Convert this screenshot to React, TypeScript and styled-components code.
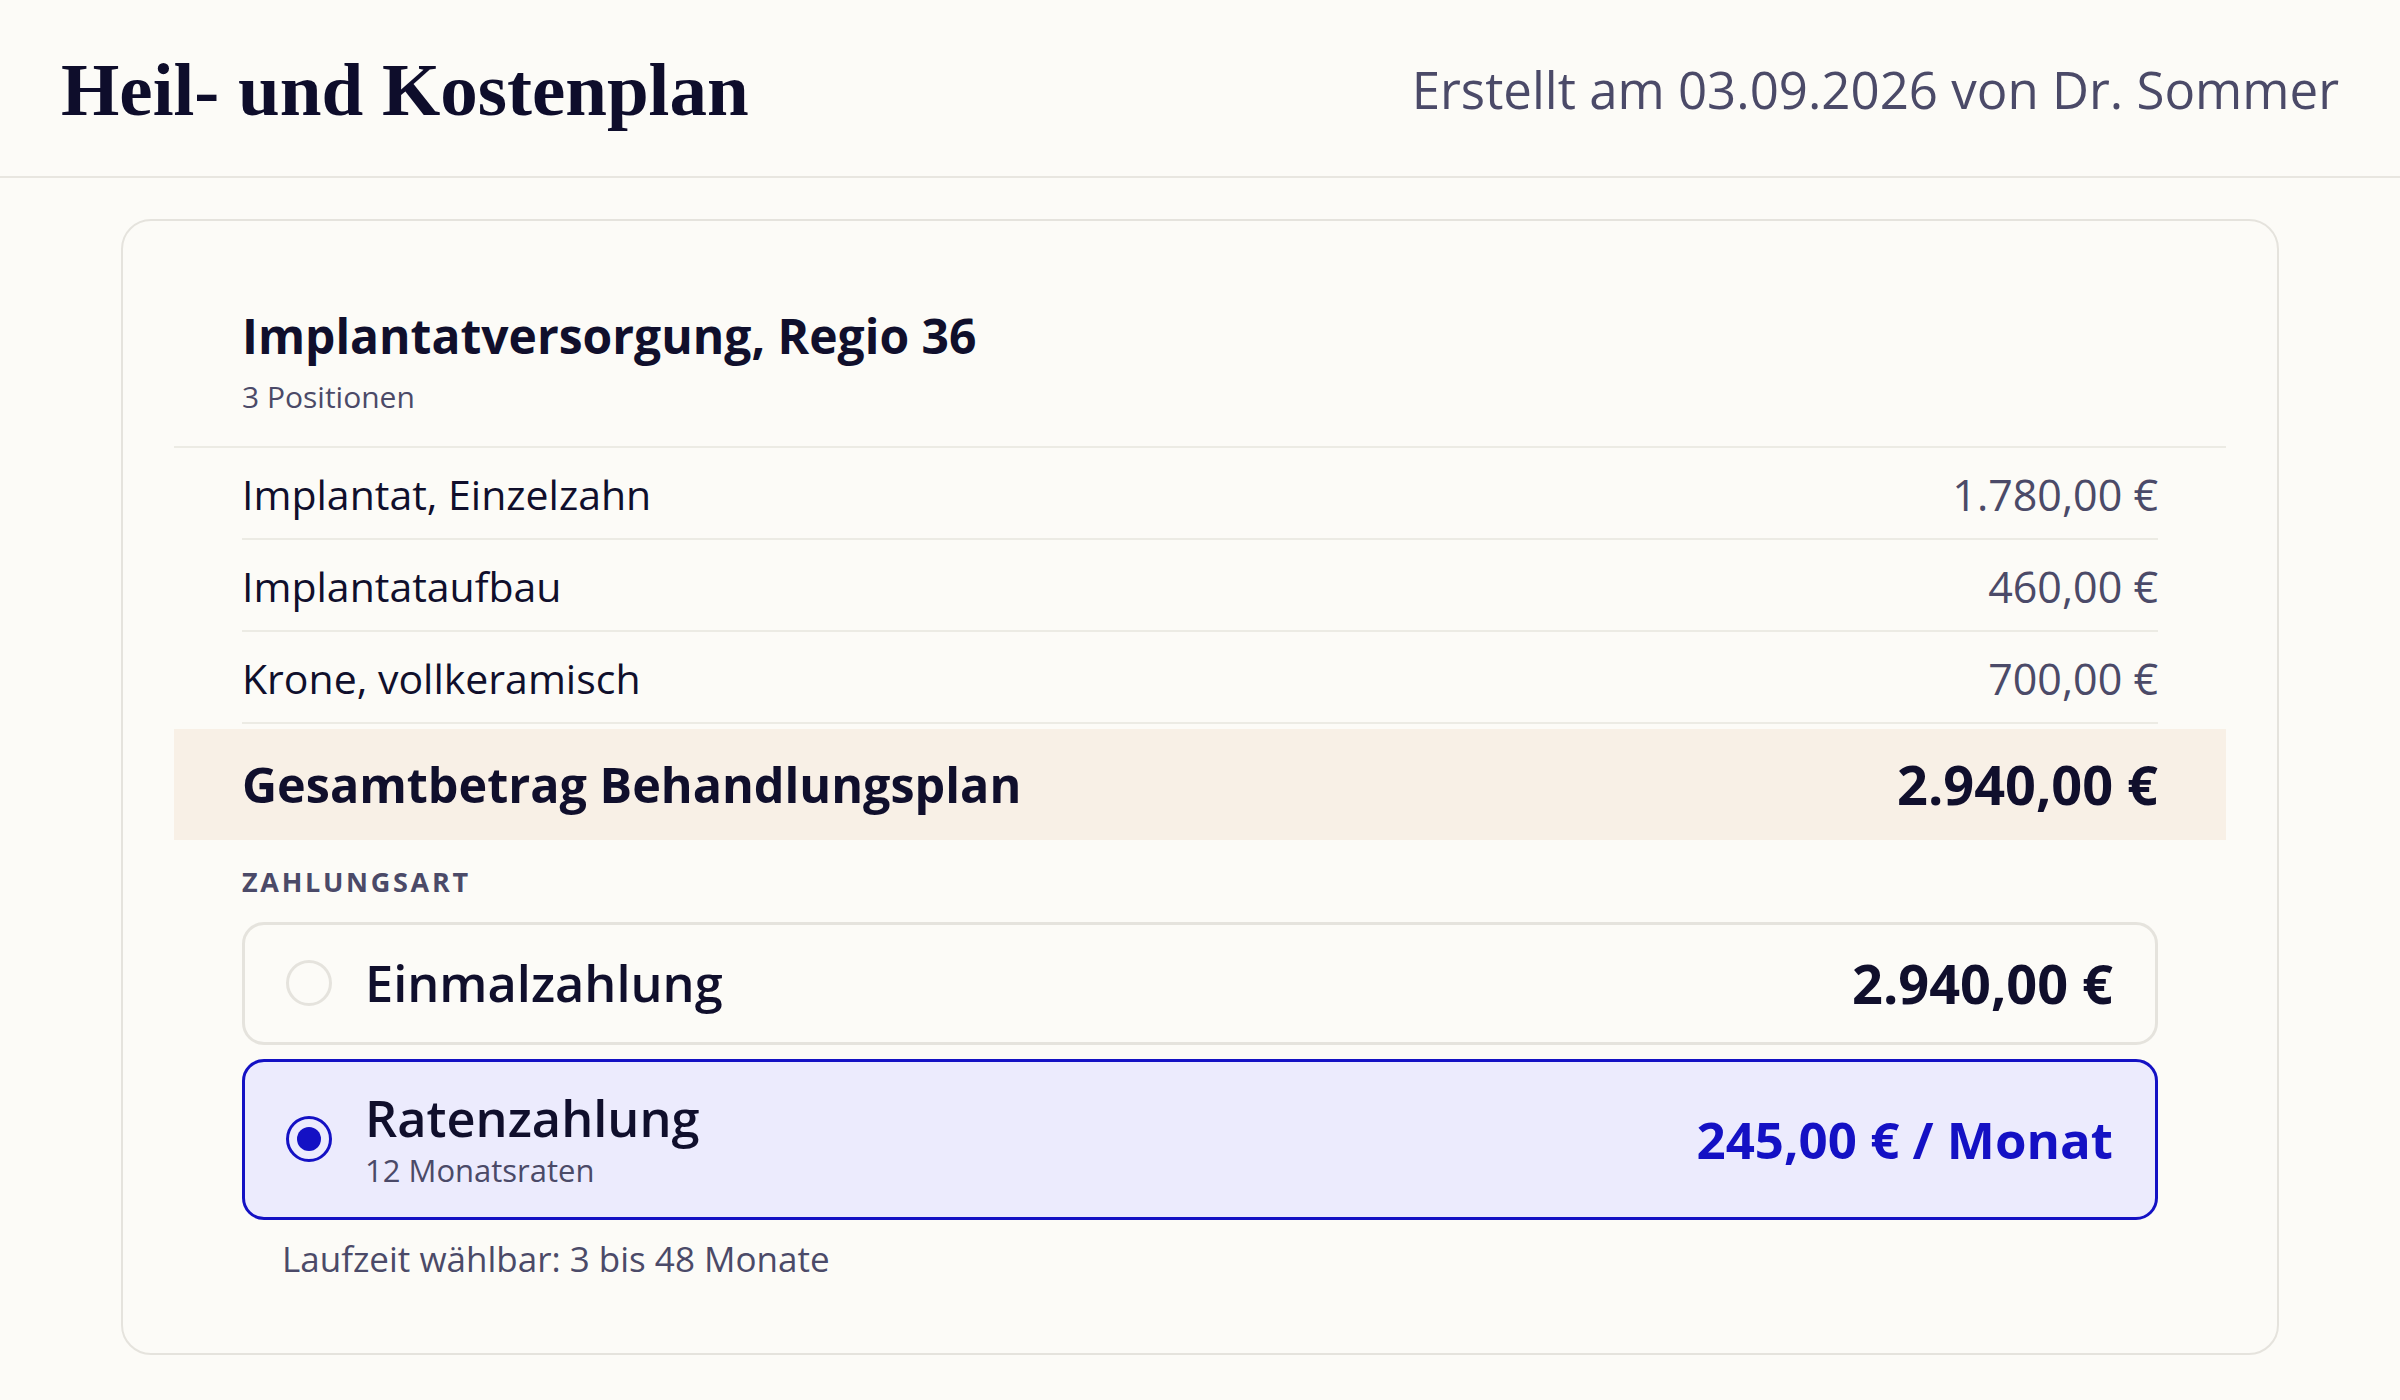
import React from 'react';
import styled, { createGlobalStyle } from 'styled-components';

const GlobalStyle = createGlobalStyle`
  * { box-sizing: border-box; }
  body {
    margin: 0;
    background: #fcfbf7;
    font-family: 'Open Sans', 'Liberation Sans', sans-serif;
    color: #100f2c;
  }
`;

type Position = { label: string; amount: string };

const positions: Position[] = [
  { label: 'Implantat, Einzelzahn', amount: '1.780,00 €' },
  { label: 'Implantataufbau', amount: '460,00 €' },
  { label: 'Krone, vollkeramisch', amount: '700,00 €' },
];

const App: React.FC = () => {
  return (
    <>
      <GlobalStyle />
      <Header>
        <PageTitle>Heil- und Kostenplan</PageTitle>
        <Meta>Erstellt am 03.09.2026 von Dr. Sommer</Meta>
      </Header>
      <Main>
        <Card>
          <SectionHead>
            <SectionTitle>Implantatversorgung, Regio 36</SectionTitle>
            <SectionSub>3 Positionen</SectionSub>
          </SectionHead>
          <Rows>
            {positions.map((p) => (
              <Row key={p.label}>
                <RowLabel>{p.label}</RowLabel>
                <RowAmount>{p.amount}</RowAmount>
              </Row>
            ))}
          </Rows>
          <TotalBand>
            <TotalLabel>Gesamtbetrag Behandlungsplan</TotalLabel>
            <TotalAmount>2.940,00 €</TotalAmount>
          </TotalBand>
          <Payment>
            <PayLabel>Zahlungsart</PayLabel>
            <Options>
              <Option>
                <Radio />
                <OptionText>
                  <OptionTitle>Einmalzahlung</OptionTitle>
                </OptionText>
                <OptionPrice>2.940,00 €</OptionPrice>
              </Option>
              <Option $selected>
                <Radio $checked />
                <OptionText>
                  <OptionTitle>Ratenzahlung</OptionTitle>
                  <OptionSub>12 Monatsraten</OptionSub>
                </OptionText>
                <OptionPrice $accent>245,00 € / Monat</OptionPrice>
              </Option>
            </Options>
            <Note>Laufzeit wählbar: 3 bis 48 Monate</Note>
          </Payment>
        </Card>
      </Main>
    </>
  );
};

const Header = styled.header`
  height: 178px;
  padding: 0 61px;
  display: flex;
  align-items: center;
  justify-content: space-between;
  border-bottom: 2px solid #e8e6e0;
`;

const PageTitle = styled.h1`
  margin: 0;
  padding-top: 4px;
  font-family: 'Liberation Serif', 'DejaVu Serif', serif;
  font-weight: 700;
  font-size: 75px;
  color: #0e0d2b;
`;

const Meta = styled.div`
  padding-top: 2px;
  font-size: 51px;
  color: #4b4a68;
`;

const Main = styled.main`
  padding: 41px 121px 0;
`;

const Card = styled.section`
  border: 2px solid #e5e3dd;
  border-radius: 30px;
  padding: 86px 51px 72px;
`;

const SectionHead = styled.div`
  padding: 0 68px 30px;
  border-bottom: 2px solid #ecebe4;
`;

const SectionTitle = styled.h2`
  margin: 0;
  font-size: 48px;
  font-weight: 700;
  line-height: 1.2;
  color: #100f2c;
`;

const SectionSub = styled.div`
  margin-top: 12px;
  font-size: 30px;
  line-height: 1.3;
  color: #4b4a68;
`;

const Rows = styled.div`
  padding: 0 68px;
`;

const Row = styled.div`
  height: 92px;
  padding-top: 3px;
  display: flex;
  align-items: center;
  justify-content: space-between;
  border-bottom: 2px solid #ecebe4;
`;

const RowLabel = styled.span`
  font-size: 41px;
  color: #100f2c;
`;

const RowAmount = styled.span`
  font-size: 43px;
  color: #4b4a68;
`;

const TotalBand = styled.div`
  margin-top: 5px;
  height: 111px;
  padding: 0 68px;
  display: flex;
  align-items: center;
  justify-content: space-between;
  background: #f8f0e6;
`;

const TotalLabel = styled.span`
  font-size: 48.5px;
  font-weight: 700;
  color: #100f2c;
`;

const TotalAmount = styled.span`
  font-size: 54px;
  font-weight: 700;
  color: #100f2c;
`;

const Payment = styled.div`
  padding: 26px 68px 0;
`;

const PayLabel = styled.div`
  font-size: 27px;
  font-weight: 700;
  line-height: 1.2;
  letter-spacing: 0.1em;
  text-transform: uppercase;
  color: #4b4a68;
`;

const Options = styled.div`
  margin-top: 24px;
  display: flex;
  flex-direction: column;
  gap: 14px;
`;

const Option = styled.div<{ $selected?: boolean }>`
  display: flex;
  align-items: center;
  padding: 26px 42px 26px 41px;
  border: 3px solid ${(p) => (p.$selected ? '#1411c4' : '#e5e3dd')};
  border-radius: 22px;
  background: ${(p) => (p.$selected ? '#ecebfd' : 'transparent')};
`;

const Radio = styled.span<{ $checked?: boolean }>`
  flex: none;
  width: 46px;
  height: 46px;
  border-radius: 50%;
  border: 3px solid ${(p) => (p.$checked ? '#1411c4' : '#e5e3dd')};
  display: flex;
  align-items: center;
  justify-content: center;

  &::after {
    content: '';
    display: ${(p) => (p.$checked ? 'block' : 'none')};
    width: 24px;
    height: 24px;
    border-radius: 50%;
    background: #1411c4;
  }
`;

const OptionText = styled.div`
  margin-left: 33px;
  flex: 1;
  display: flex;
  flex-direction: column;
`;

const OptionTitle = styled.span`
  font-size: 50.5px;
  font-weight: 600;
  line-height: 1.2;
  color: #100f2c;
`;

const OptionSub = styled.span`
  margin-top: 2px;
  font-size: 31px;
  line-height: 1.3;
  color: #4b4a68;
`;

const OptionPrice = styled.span<{ $accent?: boolean }>`
  font-size: ${(p) => (p.$accent ? '51px' : '54px')};
  font-weight: 700;
  line-height: 1.2;
  color: ${(p) => (p.$accent ? '#1411c4' : '#100f2c')};
`;

const Note = styled.div`
  margin-top: 16px;
  padding-left: 40px;
  font-size: 35px;
  line-height: 1.3;
  color: #4b4a68;
`;

export default App;
